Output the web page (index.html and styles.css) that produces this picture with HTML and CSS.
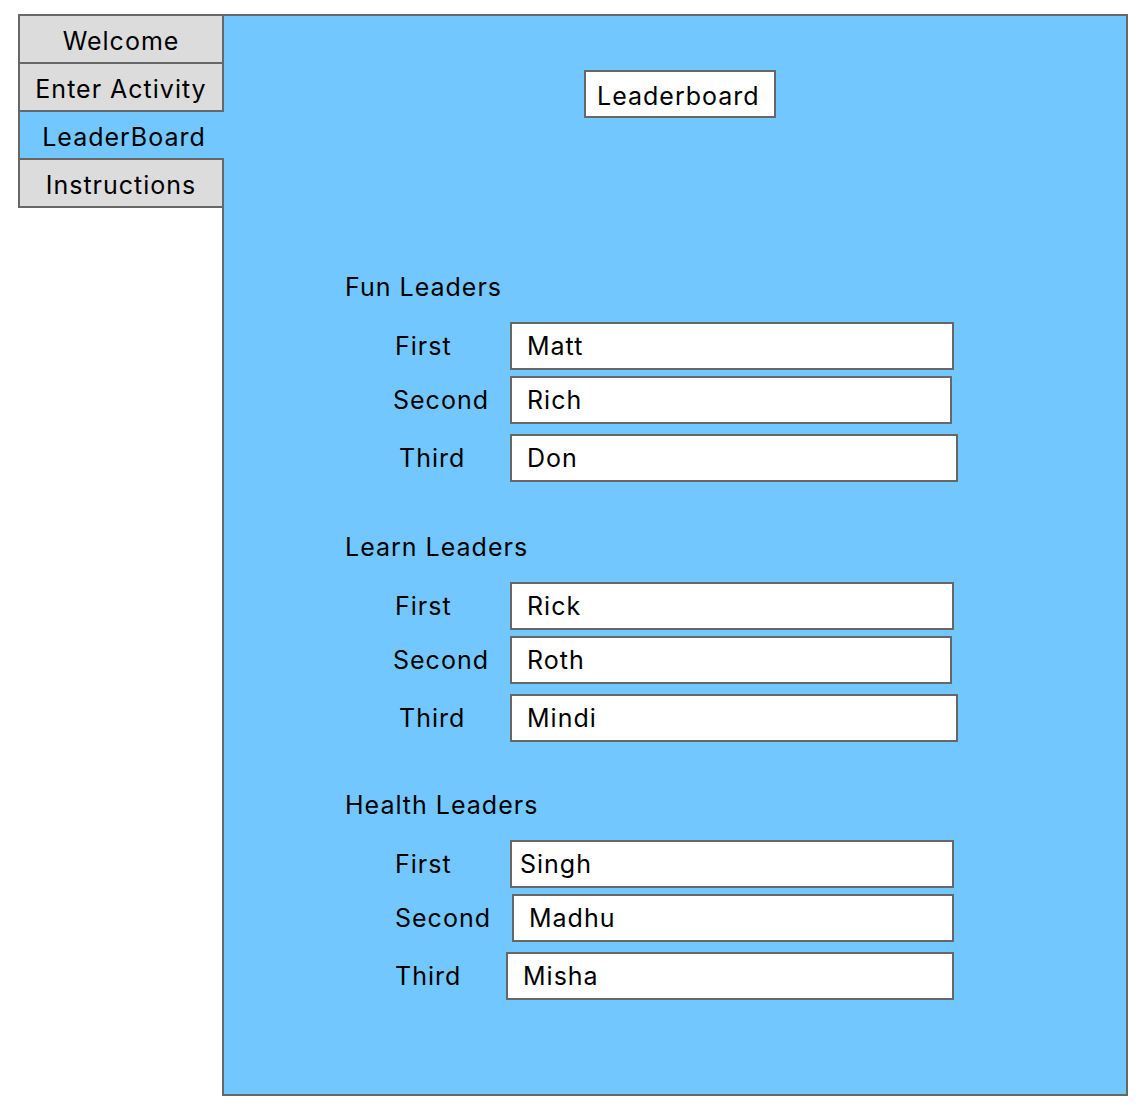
FILE: index.html
```html
<!DOCTYPE html>
<html lang="en">
<head>
<meta charset="utf-8">
<title>Leaderboard</title>
<link rel="stylesheet" href="styles.css">
</head>
<body>
<div class="app">
  <nav class="tabs">
    <div class="tab">Welcome</div>
    <div class="tab">Enter Activity</div>
    <div class="tab active">LeaderBoard</div>
    <div class="tab last">Instructions</div>
  </nav>
  <main class="panel">
    <div class="title">Leaderboard</div>

    <section class="group group-fun">
      <h2 class="heading">Fun Leaders</h2>
      <div class="row r1"><span class="label p171">First</span><div class="box w444">Matt</div></div>
      <div class="row r2"><span class="label p169">Second</span><div class="box w442">Rich</div></div>
      <div class="row r3"><span class="label p175">Third</span><div class="box w448">Don</div></div>
    </section>

    <section class="group group-learn">
      <h2 class="heading">Learn Leaders</h2>
      <div class="row r1"><span class="label p171">First</span><div class="box w444">Rick</div></div>
      <div class="row r2"><span class="label p169">Second</span><div class="box w442">Roth</div></div>
      <div class="row r3"><span class="label p175">Third</span><div class="box w448">Mindi</div></div>
    </section>

    <section class="group group-health">
      <h2 class="heading">Health Leaders</h2>
      <div class="row r1"><span class="label p171">First</span><div class="box w444 tight">Singh</div></div>
      <div class="row r2"><span class="label p171">Second</span><div class="box w442 shift-r">Madhu</div></div>
      <div class="row r3"><span class="label p171">Third</span><div class="box w448 shift-l">Misha</div></div>
    </section>
  </main>
</div>
</body>
</html>
```

FILE: styles.css
```css
* { box-sizing: border-box; }

html, body {
  margin: 0;
  padding: 0;
  background: #ffffff;
}

body {
  font-family: Inter, "Liberation Sans", Arial, sans-serif;
  font-size: 25px;
  letter-spacing: 1px;
  color: #000;
}

.app {
  display: flex;
  align-items: flex-start;
  padding: 14px 0 0 18px;
}

.tabs {
  display: flex;
  flex-direction: column;
  width: 204px;
  flex: 0 0 204px;
}

.tab {
  height: 48px;
  padding-top: 2px;
  line-height: 46px;
  text-align: center;
  background: #dcdcdc;
  border-top: 2px solid #676767;
  border-left: 2px solid #676767;
  white-space: nowrap;
  overflow: visible;
}

.tab.last {
  height: 50px;
  border-bottom: 2px solid #676767;
}

.tab.active {
  background: #72c8fe;
  width: 206px;
  margin-right: -2px;
  padding-left: 4px;
  position: relative;
  z-index: 1;
}

.panel {
  width: 906px;
  height: 1082px;
  background: #72c8fe;
  border: 2px solid #676767;
}

.title {
  width: 192px;
  height: 48px;
  margin: 54px 0 0 360px;
  padding: 4px 0 0 11px;
  line-height: 40px;
  background: #fff;
  border: 2px solid #676767;
  white-space: nowrap;
}

.group-fun { margin-top: 154px; }
.group-learn { margin-top: 50px; }
.group-health { margin-top: 48px; }

.heading {
  margin: 0 0 20px 0;
  padding-left: 121px;
  font-size: 25px;
  font-weight: normal;
  line-height: 30px;
}

.row {
  display: flex;
  align-items: center;
}
.row.r2 { margin-top: 6px; }
.row.r3 { margin-top: 10px; }

.label {
  width: 286px;
  flex: 0 0 286px;
  white-space: nowrap;
}
.p169 { padding-left: 169px; }
.p171 { padding-left: 171px; }
.p175 { padding-left: 175px; }

.box {
  height: 48px;
  line-height: 44px;
  padding-left: 15px;
  background: #fff;
  border: 2px solid #676767;
}
.w442 { width: 442px; }
.w444 { width: 444px; }
.w448 { width: 448px; }
.box.tight { padding-left: 8px; }
.box.shift-r { margin-left: 2px; }
.box.shift-l { margin-left: -4px; }
```
